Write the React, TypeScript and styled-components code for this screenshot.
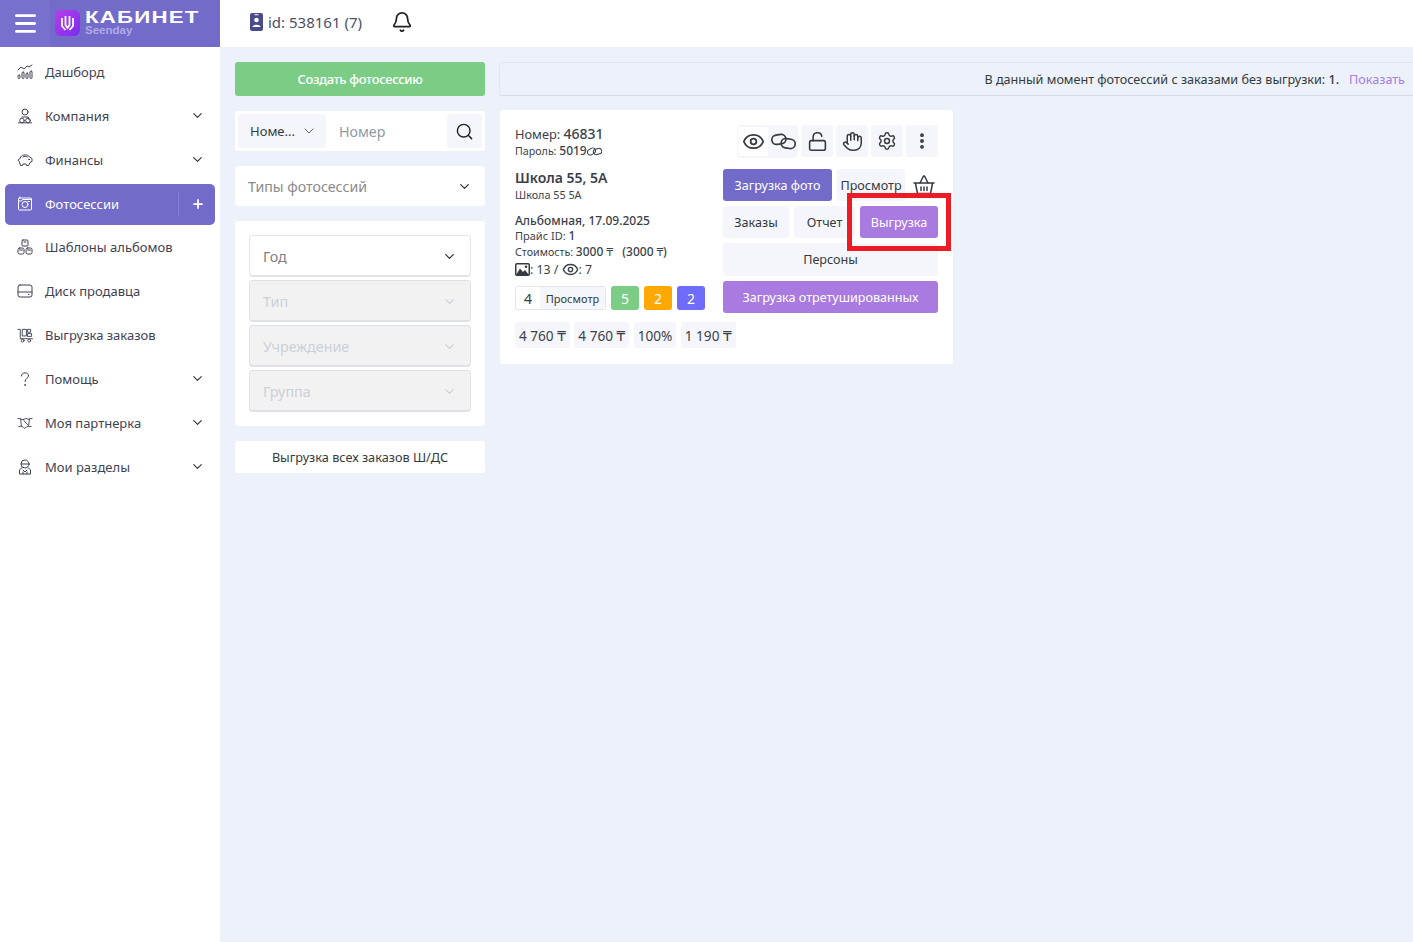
import React from "react";
import styled, { createGlobalStyle } from "styled-components";
import {
  Bell,
  ChevronDown,
  Eye,
  LockOpen,
  Hand,
  Settings,
  EllipsisVertical,
  Search,
  Plus,
  Menu,
} from "lucide-react";

const GlobalStyle = createGlobalStyle`
  html, body { margin: 0; padding: 0; }
  body {
    background: #edf1fa;
    font-family: "Noto Sans", "Open Sans", sans-serif;
    color: #343a40;
  }
  * { box-sizing: border-box; }
`;

const Page = styled.div`
  position: relative;
  width: 1413px;
  height: 942px;
  overflow: hidden;
  display: grid;
  grid-template-columns: 220px 1fr;
  grid-template-rows: 47px 1fr;
`;

const Brand = styled.div`
  background: #726bc9;
  display: flex;
  align-items: stretch;
`;

const Burger = styled.div`
  width: 50px;
  display: flex;
  align-items: center;
  justify-content: center;
  background: #7770cc;
  color: #fff;
`;

const Logo = styled.div`
  display: flex;
  align-items: center;
  gap: 5px;
  padding-left: 5px;
  margin-top: -1px;
`;

const LogoTexts = styled.div`
  display: flex;
  flex-direction: column;
`;

const LogoTitle = styled.span`
  font-family: "Liberation Sans", Arial, sans-serif;
  font-weight: 700;
  font-size: 17px;
  line-height: 15px;
  letter-spacing: 0.9px;
  color: #fff;
  transform: scaleX(1.31);
  transform-origin: left;
`;

const LogoSub = styled.span`
  font-family: "Liberation Sans", Arial, sans-serif;
  font-weight: 700;
  font-size: 11.5px;
  line-height: 11px;
  color: #aeaae6;
`;

const TopBar = styled.header`
  background: #fff;
  display: flex;
  align-items: center;
  padding: 0 0 4px 30px;
  gap: 29px;
`;

const UserId = styled.div`
  display: flex;
  align-items: center;
  gap: 5px;
  font-size: 15px;
  color: #4a4f6a;
`;

const Sidebar = styled.nav`
  background: #fff;
  padding: 5px 5px 0;
  display: flex;
  flex-direction: column;
`;

const NavRow = styled.div<{ $active?: boolean }>`
  height: 41px;
  margin-bottom: 2.85px;
  border-radius: 5px;
  display: flex;
  align-items: center;
  padding: 0 10px 1px 12px;
  font-size: 13px;
  color: ${(p) => (p.$active ? "#fff" : "#3f4254")};
  background: ${(p) => (p.$active ? "#726bc9" : "transparent")};
`;

const NavIcon = styled.span`
  width: 16px;
  height: 16px;
  margin-right: 12px;
  display: flex;
  color: inherit;
`;

const NavLabel = styled.span`
  flex: 1;
`;

const NavAdd = styled.span`
  width: 28px;
  height: 24px;
  margin-right: -1px;
  border-left: 1px solid #8781d3;
  display: flex;
  align-items: center;
  justify-content: flex-end;
  padding-right: 1px;
`;

const Main = styled.main`
  display: grid;
  grid-template-columns: 250px 1fr;
  column-gap: 14px;
  padding: 15px 0 0 15px;
  align-items: start;
`;

const LeftCol = styled.div`
  display: flex;
  flex-direction: column;
  gap: 15px;
`;

const CreateButton = styled.div`
  height: 34px;
  background: #7bcd86;
  border-radius: 3px;
  color: #fff;
  font-size: 13px;
  font-weight: 500;
  display: flex;
  align-items: center;
  justify-content: center;
  letter-spacing: -0.37px;
`;

const Panel = styled.div`
  background: #fff;
  border-radius: 3px;
`;

const SearchPanel = styled(Panel)`
  height: 40px;
  padding: 3px;
  display: flex;
  align-items: stretch;
`;

const SearchMode = styled.div`
  width: 88px;
  background: #f4f6fb;
  border-radius: 3px;
  display: flex;
  align-items: center;
  justify-content: space-between;
  padding: 0 9px 0 12px;
  font-size: 13px;
  color: #343a40;
`;

const SearchPlaceholder = styled.div`
  flex: 1;
  padding-left: 13px;
  font-size: 14.2px;
  color: #8f9aa6;
  display: flex;
  align-items: center;
`;

const SearchBtn = styled.div`
  width: 35px;
  background: #f4f6fb;
  border-radius: 3px;
  display: flex;
  align-items: center;
  justify-content: center;
`;

const TypesSelect = styled(Panel)`
  height: 40px;
  display: flex;
  align-items: center;
  justify-content: space-between;
  padding: 0 13px 0 13px;
  font-size: 14.2px;
  color: #8a8a8a;
`;

const FilterPanel = styled(Panel)`
  padding: 14px;
  display: flex;
  flex-direction: column;
  gap: 3px;
`;

const FilterSelect = styled.div<{ $disabled?: boolean }>`
  height: 42px;
  border: 1px solid ${(p) => (p.$disabled ? "#dfe1e8" : "#e3e5ec")};
  border-bottom-width: 2px;
  border-radius: 4px;
  background: ${(p) => (p.$disabled ? "#f2f2f2" : "#fff")};
  color: ${(p) => (p.$disabled ? "#ccd0d9" : "#808080")};
  font-size: 14.3px;
  display: flex;
  align-items: center;
  justify-content: space-between;
  padding: 1px 13px 0 13px;
`;

const ExportAll = styled(Panel)`
  height: 32px;
  display: flex;
  align-items: center;
  justify-content: center;
  font-size: 12.7px;
  color: #343a40;
`;

const RightCol = styled.div`
  display: flex;
  flex-direction: column;
  gap: 14px;
`;

const Notice = styled.div`
  height: 34px;
  border: 1px solid #e2e6f0;
  border-bottom-color: #d5d9e3;
  border-right: none;
  border-radius: 3px 0 0 3px;
  display: flex;
  align-items: center;
  justify-content: flex-end;
  padding-right: 8px;
  font-size: 12.6px;
  color: #343a40;
  gap: 10px;
`;

const NoticeLink = styled.span`
  color: #a87de0;
`;

const Card = styled(Panel)`
  width: 453px;
  margin-left: 1px;
  height: 254px;
  padding: 15px;
  display: flex;
  justify-content: space-between;
`;

const Info = styled.div`
  width: 200px;
  flex: none;
  display: flex;
  flex-direction: column;
`;

const InfoLine = styled.div<{ $size?: number; $top?: number; $bold?: boolean }>`
  font-size: ${(p) => p.$size ?? 11}px;
  line-height: ${(p) => (p.$size ?? 11) + 4}px;
  margin-top: ${(p) => p.$top ?? 0}px;
  font-weight: ${(p) => (p.$bold ? 600 : 400)};
  color: #3b3f4a;
  display: flex;
  align-items: center;
  white-space: pre;
`;

const Strong = styled.span<{ $size?: number }>`
  font-weight: 500;
  font-size: ${(p) => (p.$size ? `${p.$size}px` : "inherit")};
`;

const StatusRow = styled.div`
  display: flex;
  gap: 5px;
  margin-top: 8px;
`;

const StatusBox = styled.div`
  width: 91px;
  height: 24px;
  border: 1px solid #e3e5ec;
  border-radius: 3px;
  display: flex;
  align-items: stretch;
  font-size: 14px;
`;

const StatusCount = styled.span`
  width: 24px;
  display: flex;
  align-items: center;
  justify-content: center;
`;

const StatusLabel = styled.span`
  flex: 1;
  background: #f4f6fb;
  font-size: 11px;
  display: flex;
  align-items: center;
  justify-content: center;
`;

const Counter = styled.div<{ $color: string }>`
  width: 28px;
  height: 24px;
  background: ${(p) => p.$color};
  color: #fff;
  border-radius: 3px;
  font-size: 14px;
  display: flex;
  align-items: center;
  justify-content: center;
`;

const PriceRow = styled.div`
  display: flex;
  gap: 4.5px;
  margin-top: 12px;
`;

const TengeSpan = styled.span`
  font-family: "DejaVu Sans", sans-serif;
  font-size: 0.85em;
`;

const Price = styled.div`
  flex: none;
  height: 26px;
  line-height: 27px;
  padding: 0 4px;
  background: #f4f6fb;
  border-radius: 3px;
  font-size: 13.6px;
  white-space: pre;
  color: #3b3f4a;

  ${TengeSpan} {
    font-size: 1em;
  }
`;

const Actions = styled.div`
  width: 215px;
  flex: none;
  display: flex;
  flex-direction: column;
  gap: 5px;
`;

const IconRow = styled.div`
  display: flex;
  justify-content: flex-end;
  gap: 3px;
  margin-bottom: 6px;
`;

const IconGroup = styled.div`
  display: flex;
  height: 33px;
  padding: 2px 0 2px 1px;
  background: #f4f6fb;
  border-radius: 4px;
`;

const IconCell = styled.div<{ $white?: boolean }>`
  width: 30px;
  display: flex;
  align-items: center;
  justify-content: center;
  background: ${(p) => (p.$white ? "#fff" : "transparent")};
  border-radius: 3px;
`;

const IconBtn = styled.div`
  width: 32px;
  height: 32px;
  background: #f4f6fb;
  border-radius: 3px;
  display: flex;
  align-items: center;
  justify-content: center;
  color: #343a40;
`;

const ButtonRow = styled.div`
  display: flex;
  gap: 5px;
`;

const Action = styled.div<{ $bg?: string; $w?: number; $h?: number }>`
  height: ${(p) => p.$h ?? 32}px;
  width: ${(p) => (p.$w ? `${p.$w}px` : "100%")};
  background: ${(p) => p.$bg ?? "#f4f6fb"};
  color: ${(p) => (p.$bg ? "#fff" : "#343a40")};
  border-radius: 3px;
  font-size: 12.6px;
  display: flex;
  align-items: center;
  justify-content: center;
  white-space: nowrap;
`;

const BasketCell = styled.div`
  width: 28px;
  height: 32px;
  display: flex;
  align-items: center;
  justify-content: center;
  color: #343a40;
`;

const Highlight = styled.div`
  position: absolute;
  left: 847px;
  top: 193px;
  width: 104px;
  height: 58px;
  border: 5px solid #ed1c24;
`;

const stroke = { fill: "none", stroke: "currentColor", strokeWidth: 1, strokeLinecap: "round" as const, strokeLinejoin: "round" as const };

const DashIcon = () => (
  <svg width="16" height="16" viewBox="0 0 16 16" {...stroke}>
    <path d="M1 6l3-3 3 2 3-3 2 1 3-2" />
    <rect x="1" y="11" width="2" height="3.5" rx="1" />
    <rect x="5" y="8" width="2" height="6.5" rx="1" />
    <rect x="9" y="9" width="2" height="5.5" rx="1" />
    <rect x="13" y="7" width="2" height="7.5" rx="1" />
  </svg>
);
const CompanyIcon = () => (
  <svg width="16" height="16" viewBox="0 0 16 16" {...stroke}>
    <circle cx="8" cy="4" r="3" />
    <path d="M5 9h6l1 2.5" />
    <circle cx="5" cy="12.5" r="2.3" />
    <circle cx="11" cy="12.5" r="2.3" />
    <path d="M1.5 14.8h13" />
  </svg>
);
const PiggyIcon = () => (
  <svg width="16" height="16" viewBox="0 0 16 16" {...stroke}>
    <path d="M4 4.5c1-2 7-2.500 8.500 0.500l2.500 1.500v3l-2 1-1.500 3h-2l-.5-1.500h-3l-.5 1.500h-2l-1-3.500L1 8l1.500-1z" />
    <path d="M6 5c1.500-.8 3-.8 4.500 0" />
    <circle cx="12" cy="7.500" r="0.400" />
  </svg>
);
const CameraIcon = () => (
  <svg width="16" height="16" viewBox="0 0 16 16" {...stroke}>
    <rect x="1.500" y="2" width="13" height="12" rx="1" />
    <circle cx="8" cy="8.500" r="3" />
    <path d="M1.500 5h3l1-1.500h8M3 1v1M11 5.500h1.500" />
  </svg>
);
const TemplateIcon = () => (
  <svg width="16" height="16" viewBox="0 0 16 16" {...stroke}>
    <rect x="5" y="1" width="6" height="6" rx="1" />
    <rect x="1" y="9" width="6" height="6" rx="1.500" />
    <rect x="9" y="9" width="6" height="6" rx="1.500" />
    <path d="M7 3h2M2.500 11h3M10.500 11h3" />
  </svg>
);
const DiskIcon = () => (
  <svg width="16" height="16" viewBox="0 0 16 16" {...stroke}>
    <rect x="1" y="2" width="14" height="12" rx="2" />
    <path d="M1 9h14M11.500 11.500h.5" />
  </svg>
);
const CartIcon = () => (
  <svg width="17" height="16" viewBox="0 0 17 16" {...stroke}>
    <path d="M1 2h2.500v10h13" />
    <rect x="6" y="2" width="4" height="7" />
    <rect x="11.500" y="2" width="3" height="3" />
    <rect x="11.500" y="6.500" width="4" height="3" />
    <circle cx="6" cy="14" r="1.500" />
    <circle cx="13" cy="14" r="1.500" />
  </svg>
);
const HelpIcon = () => (
  <svg width="16" height="16" viewBox="0 0 16 16" {...stroke}>
    <path d="M4.500 5c0-2 1.500-3.200 3.500-3.200S11.500 3 11.500 5 8 7.500 8 10.500" />
    <circle cx="8" cy="14" r="0.500" />
  </svg>
);
const HandshakeIcon = () => (
  <svg width="18" height="16" viewBox="0 0 18 16" {...stroke}>
    <path d="M1 3h3l1 9H2M17 3h-3l-1 9h3M4 4h3l3-1 4 1M5 11l3 3 2-1 3-2M7 4l3 4 2 2" />
  </svg>
);
const PersonIcon = () => (
  <svg width="16" height="16" viewBox="0 0 16 16" {...stroke}>
    <circle cx="8" cy="5" r="4" />
    <path d="M4 5h8M5 8.500L2.500 11v4h11v-4L11 8.500M6 11l2 2 2-2M6 15v-2M10 15v-2" />
  </svg>
);
const ImageGlyph = () => (
  <svg width="15" height="13" viewBox="0 0 15 13">
    <rect x="0.750" y="0.750" width="13.500" height="11.500" rx="1" fill="#fff" stroke="#343a40" strokeWidth="1.500" />
    <path d="M1 12l4-6.500 3 3.500 2-2 4 5z" fill="#343a40" />
    <circle cx="11" cy="3.800" r="1.300" fill="#343a40" />
  </svg>
);
const Tenge = () => <TengeSpan>₸</TengeSpan>;

// two interlocked rings, same glyph in the password line and the toolbar
const LinkRings = ({ size, width = 1.5, tilt = 0 }: { size: number; width?: number; tilt?: number }) => (
  <svg width={size} height={size} viewBox="0 0 24 24" fill="none" stroke="currentColor" strokeWidth={width}>
    <g transform={`rotate(${tilt} 12 12)`}>
      <rect x="0.800" y="5.500" width="13.500" height="9" rx="4.500" transform="rotate(-8 7.500 10)" />
      <rect x="9.700" y="9.500" width="13.500" height="9" rx="4.500" transform="rotate(8 16.500 14)" />
    </g>
  </svg>
);

const BasketIcon = () => (
  <svg width="22" height="20" viewBox="0 0 22 20" fill="none" stroke="currentColor" strokeWidth="1.500" strokeLinejoin="round" strokeLinecap="round">
    <path d="M7 8l3.500-7M15 8l-3.500-7" />
    <path d="M1 8h20" />
    <path d="M2.500 8.500l2 10h13l2-10" />
    <path d="M8 12v3.500M11 12v3.500M14 12v3.500" />
  </svg>
);

const LogoMark = () => (
  <svg width="25" height="26" viewBox="0 0 25 26">
    <defs>
      <linearGradient id="lg" x1="0" y1="0" x2="1" y2="1">
        <stop offset="0" stopColor="#b93de8" />
        <stop offset="1" stopColor="#7a2cf0" />
      </linearGradient>
    </defs>
    <rect width="25" height="26" rx="6" fill="url(#lg)" />
    <g fill="none" stroke="#fff" strokeWidth="1.800">
      <path d="M7 8v8l3.500 4" />
      <path d="M18 8v8l-3.500 4" />
      <path d="M10.500 6v9l2 3 2-3V6" />
    </g>
  </svg>
);

const IdIcon = () => (
  <svg width="13" height="18" viewBox="0 0 13 18">
    <rect width="13" height="18" rx="2" fill="#4b4a8a" />
    <circle cx="6.500" cy="7" r="2.300" fill="#fff" />
    <path d="M2.500 14c0-3 8-3 8 0z" fill="#fff" />
    <rect x="4.500" y="1.200" width="4" height="1" fill="#fff" />
  </svg>
);

const navItems: { label: string; icon: React.ReactNode; arrow?: boolean; active?: boolean }[] = [
  { label: "Дашборд", icon: <DashIcon /> },
  { label: "Компания", icon: <CompanyIcon />, arrow: true },
  { label: "Финансы", icon: <PiggyIcon />, arrow: true },
  { label: "Фотосессии", icon: <CameraIcon />, active: true },
  { label: "Шаблоны альбомов", icon: <TemplateIcon /> },
  { label: "Диск продавца", icon: <DiskIcon /> },
  { label: "Выгрузка заказов", icon: <CartIcon /> },
  { label: "Помощь", icon: <HelpIcon />, arrow: true },
  { label: "Моя партнерка", icon: <HandshakeIcon />, arrow: true },
  { label: "Мои разделы", icon: <PersonIcon />, arrow: true },
];

export default function App() {
  return (
    <Page>
      <GlobalStyle />
      <Brand>
        <Burger>
          <Menu size={27} strokeWidth={2.6} />
        </Burger>
        <Logo>
          <LogoMark />
          <LogoTexts>
            <LogoTitle>КАБИНЕТ</LogoTitle>
            <LogoSub>Seenday</LogoSub>
          </LogoTexts>
        </Logo>
      </Brand>
      <TopBar>
        <UserId>
          <IdIcon />
          id: 538161 (7)
        </UserId>
        <Bell size={22} strokeWidth={1.9} color="#222" />
      </TopBar>
      <Sidebar>
        {navItems.map((item) => (
          <NavRow key={item.label} $active={item.active}>
            <NavIcon>{item.icon}</NavIcon>
            <NavLabel>{item.label}</NavLabel>
            {item.arrow && <ChevronDown size={15} strokeWidth={1.8} color="#333" />}
            {item.active && (
              <NavAdd>
                <Plus size={14} strokeWidth={3} color="#fff" />
              </NavAdd>
            )}
          </NavRow>
        ))}
      </Sidebar>
      <Main>
        <LeftCol>
          <CreateButton>Создать фотосессию</CreateButton>
          <SearchPanel>
            <SearchMode>
              Номе...
              <ChevronDown size={16} strokeWidth={1.5} color="#5b6270" />
            </SearchMode>
            <SearchPlaceholder>Номер</SearchPlaceholder>
            <SearchBtn>
              <Search size={19} strokeWidth={1.8} color="#222" />
            </SearchBtn>
          </SearchPanel>
          <TypesSelect>
            Типы фотосессий
            <ChevronDown size={15} strokeWidth={2} color="#333" />
          </TypesSelect>
          <FilterPanel>
            <FilterSelect>
              Год
              <ChevronDown size={15} strokeWidth={2} color="#333" />
            </FilterSelect>
            <FilterSelect $disabled>
              Тип
              <ChevronDown size={15} strokeWidth={2} color="#ccd0d9" />
            </FilterSelect>
            <FilterSelect $disabled>
              Учреждение
              <ChevronDown size={15} strokeWidth={2} color="#ccd0d9" />
            </FilterSelect>
            <FilterSelect $disabled>
              Группа
              <ChevronDown size={15} strokeWidth={2} color="#ccd0d9" />
            </FilterSelect>
          </FilterPanel>
          <ExportAll>Выгрузка всех заказов Ш/ДС</ExportAll>
        </LeftCol>
        <RightCol>
          <Notice>
            <span>
              В данный момент фотосессий с заказами без выгрузки: <Strong>1.</Strong>
            </span>
            <NoticeLink>Показать</NoticeLink>
          </Notice>
          <Card>
            <Info>
              <InfoLine $size={12.8} $top={1}>
                Номер: <Strong $size={14}>46831</Strong>
              </InfoLine>
              <InfoLine $size={10.7} $top={1}>
                Пароль: <Strong $size={12}>5019</Strong> <LinkRings size={15} width={1.7} tilt={-24} />
              </InfoLine>
              <InfoLine $size={14} $top={10} $bold>
                Школа 55, 5А
              </InfoLine>
              <InfoLine $size={10.8} $top={1}>
                Школа 55 5А
              </InfoLine>
              <InfoLine $size={12} $top={10}>
                <Strong>Альбомная, 17.09.2025</Strong>
              </InfoLine>
              <InfoLine $size={11} $top={-1}>
                Прайс ID: <Strong $size={12}>1</Strong>
              </InfoLine>
              <InfoLine $size={10.7} $top={2}>
                Стоимость: <Strong $size={12}>3000 <Tenge />{"   "}(3000 <Tenge />)</Strong>
              </InfoLine>
              <InfoLine $size={12.3} $top={1}>
                <ImageGlyph />: 13 / <Eye size={17} strokeWidth={2} />: 7
              </InfoLine>
              <StatusRow>
                <StatusBox>
                  <StatusCount>4</StatusCount>
                  <StatusLabel>Просмотр</StatusLabel>
                </StatusBox>
                <Counter $color="#7bcd86">5</Counter>
                <Counter $color="#ffa800">2</Counter>
                <Counter $color="#6e6cf8">2</Counter>
              </StatusRow>
              <PriceRow>
                <Price>4 760 <Tenge /></Price>
                <Price>4 760 <Tenge /></Price>
                <Price>100%</Price>
                <Price>1 190 <Tenge /></Price>
              </PriceRow>
            </Info>
            <Actions>
              <IconRow>
                <IconGroup>
                  <IconCell $white>
                    <Eye size={23} strokeWidth={1.8} />
                  </IconCell>
                  <IconCell>
                    <LinkRings size={25} width={1.6} />
                  </IconCell>
                </IconGroup>
                <IconBtn>
                  <LockOpen size={21} strokeWidth={1.8} />
                </IconBtn>
                <IconBtn>
                  <Hand size={21} strokeWidth={1.7} />
                </IconBtn>
                <IconBtn>
                  <Settings size={20} strokeWidth={1.7} />
                </IconBtn>
                <IconBtn>
                  <EllipsisVertical size={20} strokeWidth={2.6} />
                </IconBtn>
              </IconRow>
              <ButtonRow>
                <Action $bg="#726bc9" $w={109}>Загрузка фото</Action>
                <Action $w={68}>Просмотр</Action>
                <BasketCell>
                  <BasketIcon />
                </BasketCell>
              </ButtonRow>
              <ButtonRow>
                <Action $w={66}>Заказы</Action>
                <Action $w={61}>Отчет</Action>
                <Action $w={78} $bg="#a97be0">Выгрузка</Action>
              </ButtonRow>
              <Action $h={33}>Персоны</Action>
              <Action $bg="#a97be0">Загрузка отретушированных</Action>
            </Actions>
          </Card>
        </RightCol>
      </Main>
      <Highlight />
    </Page>
  );
}
